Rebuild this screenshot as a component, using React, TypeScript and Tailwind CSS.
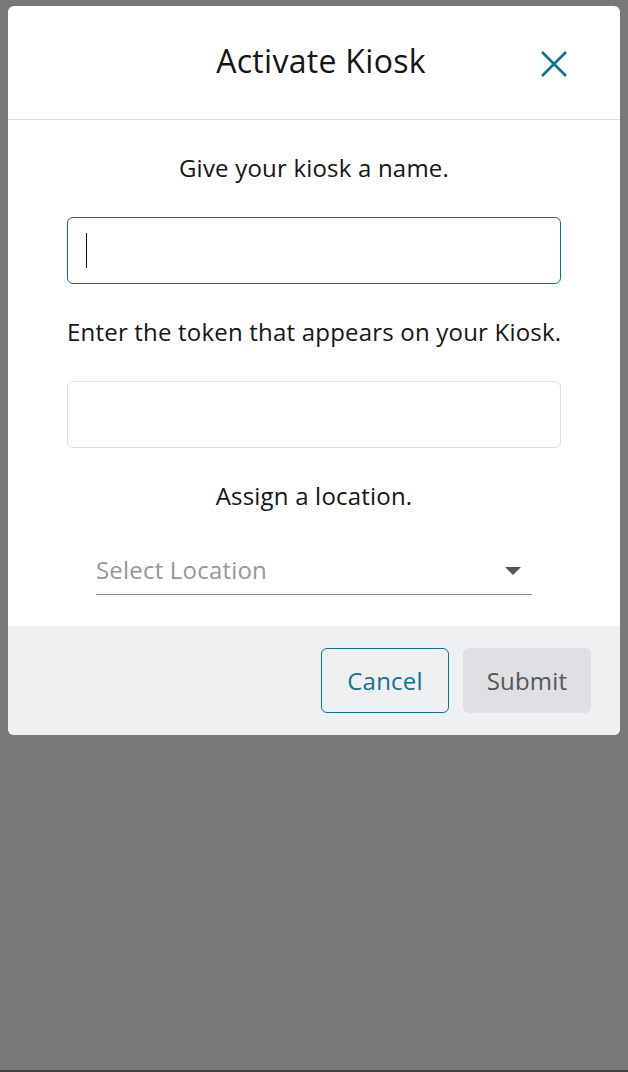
import React, { useState } from 'react';

const font = { fontFamily: '"Open Sans", Lato, sans-serif' };

const CloseIcon = () => (
  <svg width="28" height="28" viewBox="0 0 28 28" fill="none">
    <path d="M2 2 L26 26 M26 2 L2 26" stroke="#12708f" strokeWidth="2.6" strokeLinecap="butt" />
  </svg>
);

const App: React.FC = () => {
  const [name, setName] = useState('');
  const [token, setToken] = useState('');

  return (
    <div className="min-h-screen flex flex-col bg-[#77787a]" style={font}>
      <div className="flex-grow px-2 pt-[6px]">
        {/* Modal */}
        <div className="bg-white rounded-md overflow-hidden">
          {/* Header */}
          <div className="relative h-[114px] flex items-center justify-center border-b border-[#dcdcdc]">
            <h2 className="text-[32px] tracking-[0.3px] text-[#151515] ml-[14px] -mt-[3px]">Activate Kiosk</h2>
            <button className="absolute right-[52px] top-[44px]">
              <CloseIcon />
            </button>
          </div>

          {/* Body */}
          <div className="px-[59px] pt-[33px] pb-[31px] flex flex-col text-[24px] tracking-[0.2px] text-[#151515]">
            <p className="text-center leading-[30px]">Give your kiosk a name.</p>
            <div className="mt-[34px] h-[67px] rounded-md border border-[#0e6f8e] flex items-center px-[18px]">
              <span className="w-px h-[35px] bg-[#111]" />
              <input
                value={name}
                onChange={(e) => setName(e.target.value)}
                className="flex-1 outline-none bg-transparent"
              />
            </div>
            <p className="mt-[33px] text-center leading-[30px] whitespace-nowrap">Enter the token that appears on your Kiosk.</p>
            <input
              value={token}
              onChange={(e) => setToken(e.target.value)}
              className="mt-[34px] h-[67px] rounded-md border border-[#dedede] px-[18px] outline-none"
            />
            <p className="mt-[33px] text-center leading-[30px]">Assign a location.</p>
            <div className="mx-[29px] h-[48px] mt-[36px] border-b border-[#8d8d8d] flex items-center justify-between">
              <span className="text-[#979797] -mt-[2px]">Select Location</span>
              <svg width="16" height="8" viewBox="0 0 16 8" className="mr-[11px]">
                <path d="M0 0 H16 L8 8 Z" fill="#555" />
              </svg>
            </div>
          </div>

          {/* Footer */}
          <div className="bg-[#eff0f2] h-[109px] flex items-start justify-end gap-[14px] pt-[22px] pr-[29px] text-[24px] tracking-[0.2px]">
            <button className="w-[128px] h-[65px] rounded-md border border-[#0e6f8e] text-[#13708e] bg-transparent">
              Cancel
            </button>
            <button className="w-[128px] h-[65px] rounded-md bg-[#dee0e3] text-[#555]">
              Submit
            </button>
          </div>
        </div>
      </div>
      <div className="h-[2px] bg-[#404143]" />
    </div>
  );
};

export default App;
